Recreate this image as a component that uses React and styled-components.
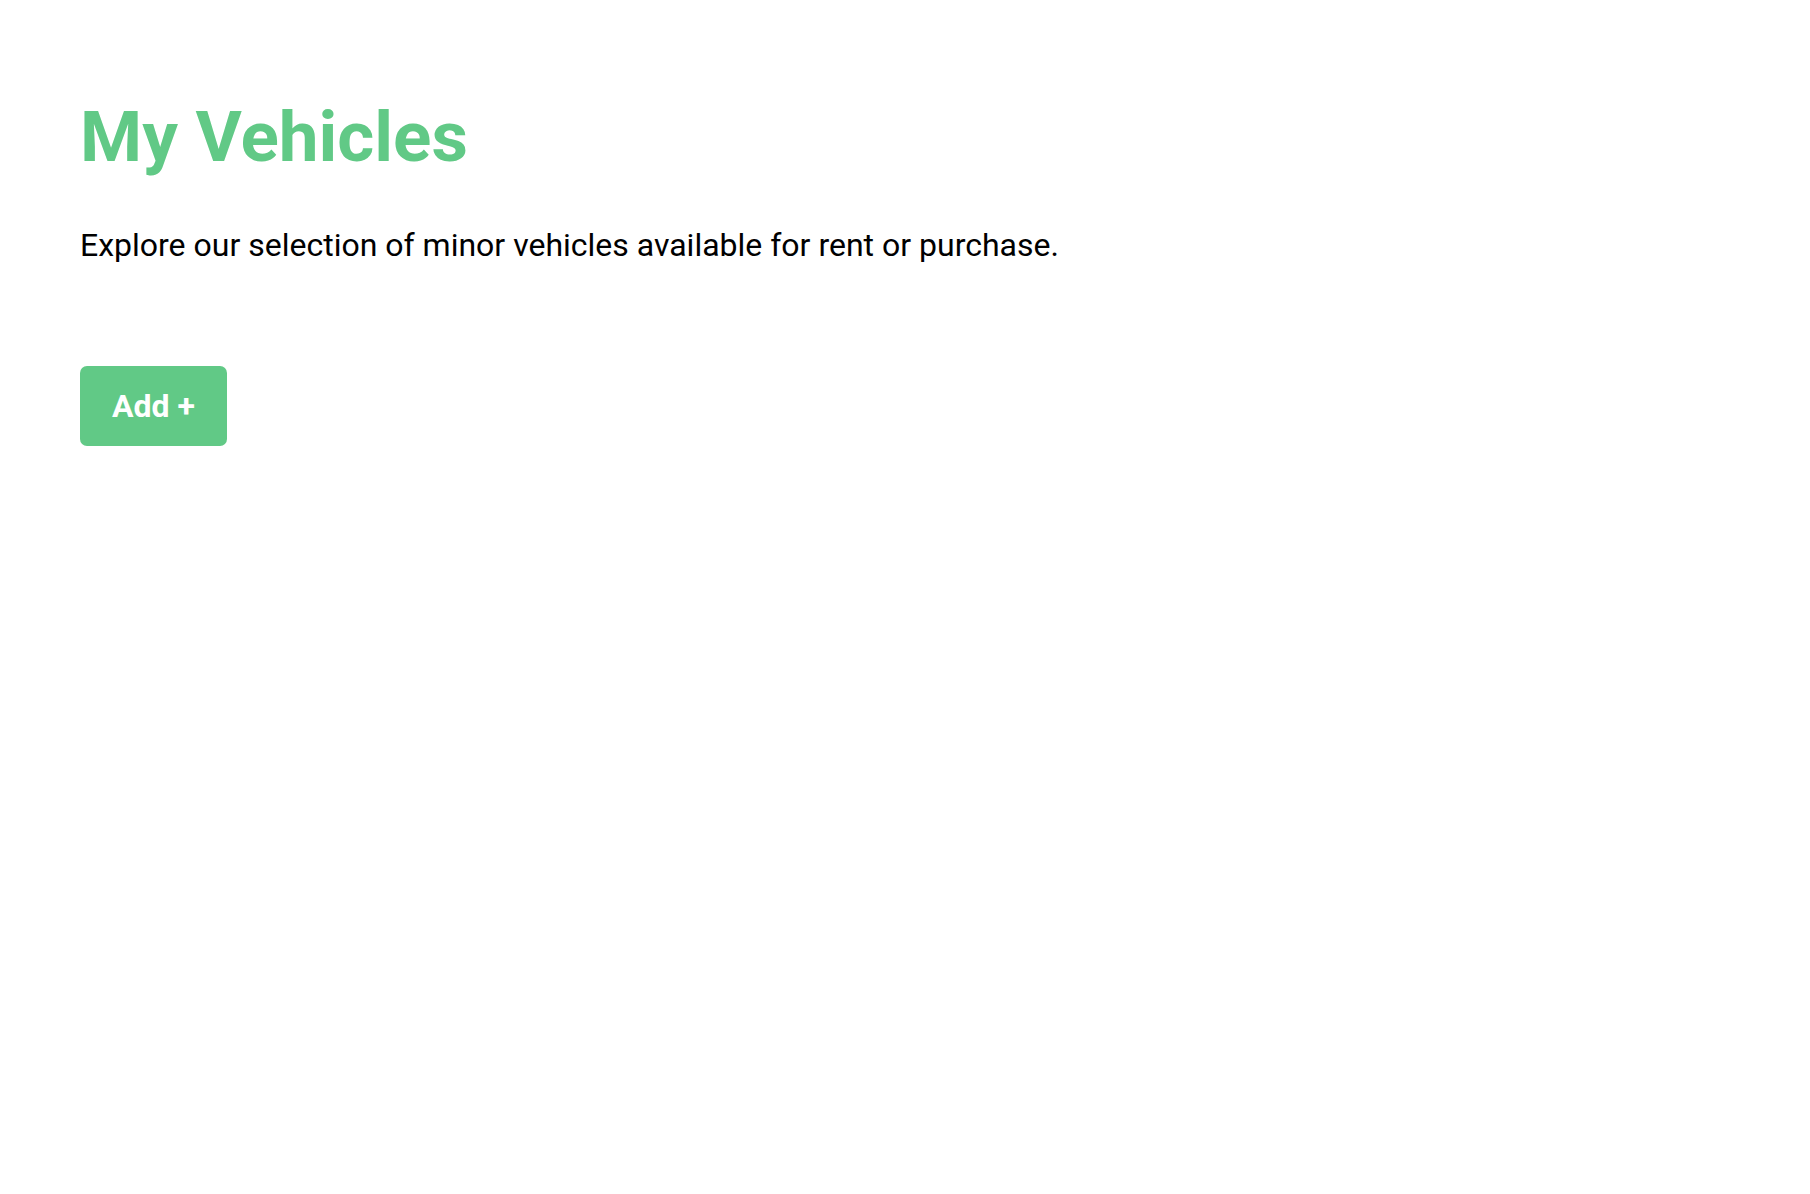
import React from 'react';
import styled, { createGlobalStyle } from 'styled-components';

const green = '#61c986';

const GlobalStyle = createGlobalStyle`
  html, body {
    margin: 0;
    padding: 0;
    background: #ffffff;
  }
  body {
    font-family: Roboto, "Liberation Sans", Arial, sans-serif;
    color: #000000;
  }
`;

const Page = styled.main`
  display: flex;
  flex-direction: column;
  align-items: flex-start;
  padding: 95px 80px 0;
`;

const Title = styled.h1`
  margin: 0;
  font-size: 71px;
  font-weight: 700;
  line-height: 1.172;
  color: ${green};
`;

const Lead = styled.p`
  margin: 49px 0 0;
  font-size: 32px;
  font-weight: 400;
  line-height: 1.172;
`;

const AddButton = styled.button`
  margin-top: 101px;
  height: 80px;
  padding: 0 32px;
  border: none;
  border-radius: 7px;
  background: ${green};
  color: #ffffff;
  font-family: inherit;
  font-size: 32px;
  font-weight: 700;
  cursor: pointer;
`;

export default function App() {
  return (
    <>
      <GlobalStyle />
      <Page>
        <Title>My Vehicles</Title>
        <Lead>Explore our selection of minor vehicles available for rent or purchase.</Lead>
        <AddButton>Add +</AddButton>
      </Page>
    </>
  );
}
